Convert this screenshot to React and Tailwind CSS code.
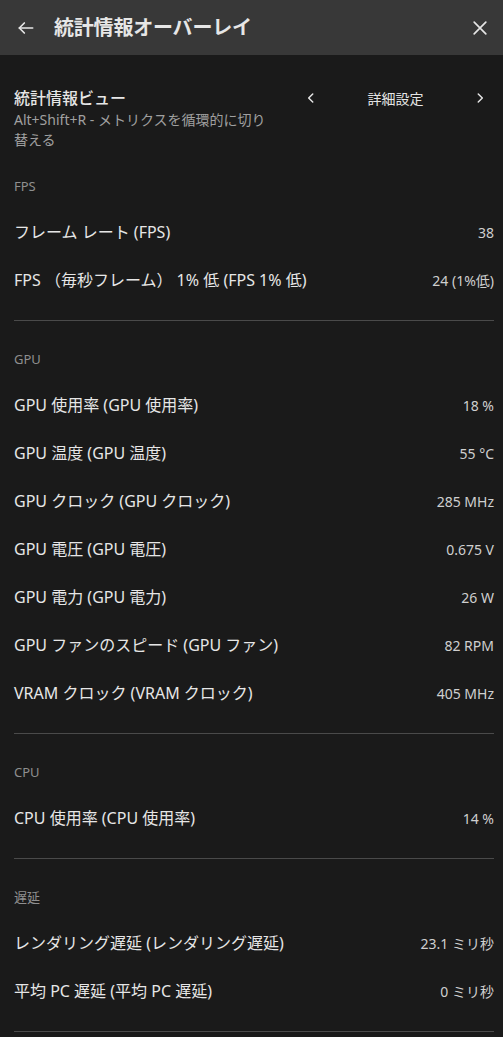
// 統計情報オーバーレイの設定パネル
const sections = [
  {
    label: "FPS",
    rows: [
      ["フレーム レート (FPS)", "38"],
      ["FPS （毎秒フレーム） 1% 低 (FPS 1% 低)", "24 (1%低)"],
    ],
  },
  {
    label: "GPU",
    rows: [
      ["GPU 使用率 (GPU 使用率)", "18 %"],
      ["GPU 温度 (GPU 温度)", "55 °C"],
      ["GPU クロック (GPU クロック)", "285 MHz"],
      ["GPU 電圧 (GPU 電圧)", "0.675 V"],
      ["GPU 電力 (GPU 電力)", "26 W"],
      ["GPU ファンのスピード (GPU ファン)", "82 RPM"],
      ["VRAM クロック (VRAM クロック)", "405 MHz"],
    ],
  },
  {
    label: "CPU",
    rows: [["CPU 使用率 (CPU 使用率)", "14 %"]],
  },
  {
    label: "遅延",
    rows: [
      ["レンダリング遅延 (レンダリング遅延)", "23.1 ミリ秒"],
      ["平均 PC 遅延 (平均 PC 遅延)", "0 ミリ秒"],
    ],
  },
]

const font = { fontFamily: '"Noto Sans", "Noto Sans CJK JP", sans-serif' }

export default function App() {
  return (
    <div className="min-h-[1037px] bg-[#1a1a1a] text-[#e6e6e6]" style={font}>
      <header className="flex h-[55px] items-center bg-[#383838] pl-[16px] pr-[13px]">
        <svg width="20" height="20" viewBox="0 0 24 24" fill="none" stroke="#e6e6e6" strokeWidth="2" strokeLinecap="round" strokeLinejoin="round">
          <path d="M20 12H4" />
          <path d="M10 6l-6 6 6 6" />
        </svg>
        <h1 className="ml-[18px] text-[20px] font-semibold tracking-[-0.2px]">統計情報オーバーレイ</h1>
        <svg className="ml-auto" width="20" height="20" viewBox="0 0 24 24" fill="none" stroke="#e6e6e6" strokeWidth="2" strokeLinecap="round">
          <path d="M5 5l14 14M19 5L5 19" />
        </svg>
      </header>

      <div className="pl-[14px] pr-[9px]">
        <div className="flex items-start pt-[31px]">
          <div className="w-[262px]">
            <div className="text-[16px] font-medium leading-[24px]">統計情報ビュー</div>
            <div className="text-[14px] leading-[20px] text-[#a0a0a0]">
              Alt+Shift+R - メトリクスを循環的に切り替える
            </div>
          </div>
          <div className="ml-auto flex h-[24px] w-[190px] items-center justify-between pr-[7px] text-[14px]">
            <svg width="14" height="14" viewBox="0 0 24 24" fill="none" stroke="#e6e6e6" strokeWidth="2.5" strokeLinecap="round" strokeLinejoin="round">
              <path d="M15 5l-7 7 7 7" />
            </svg>
            <span>詳細設定</span>
            <svg width="14" height="14" viewBox="0 0 24 24" fill="none" stroke="#e6e6e6" strokeWidth="2.5" strokeLinecap="round" strokeLinejoin="round">
              <path d="M9 5l7 7-7 7" />
            </svg>
          </div>
        </div>

        {sections.map((s, i) => (
          <section
            key={s.label}
            className={i === 0 ? "pt-[24px] pb-[16px] border-b border-[#4a4a4a]" : "pt-[26px] pb-[16px] border-b border-[#4a4a4a]"}
          >
            <div className="h-[24px] text-[13px] leading-[24px] text-[#8f8f8f]">{s.label}</div>
            <div className="mt-[10px]">
              {s.rows.map(([name, value]) => (
                <div key={name} className="flex h-[48px] items-center justify-between">
                  <span className="text-[16px]">{name}</span>
                  <span className="text-[14px] text-[#cfcfcf]">{value}</span>
                </div>
              ))}
            </div>
          </section>
        ))}
      </div>
    </div>
  )
}
